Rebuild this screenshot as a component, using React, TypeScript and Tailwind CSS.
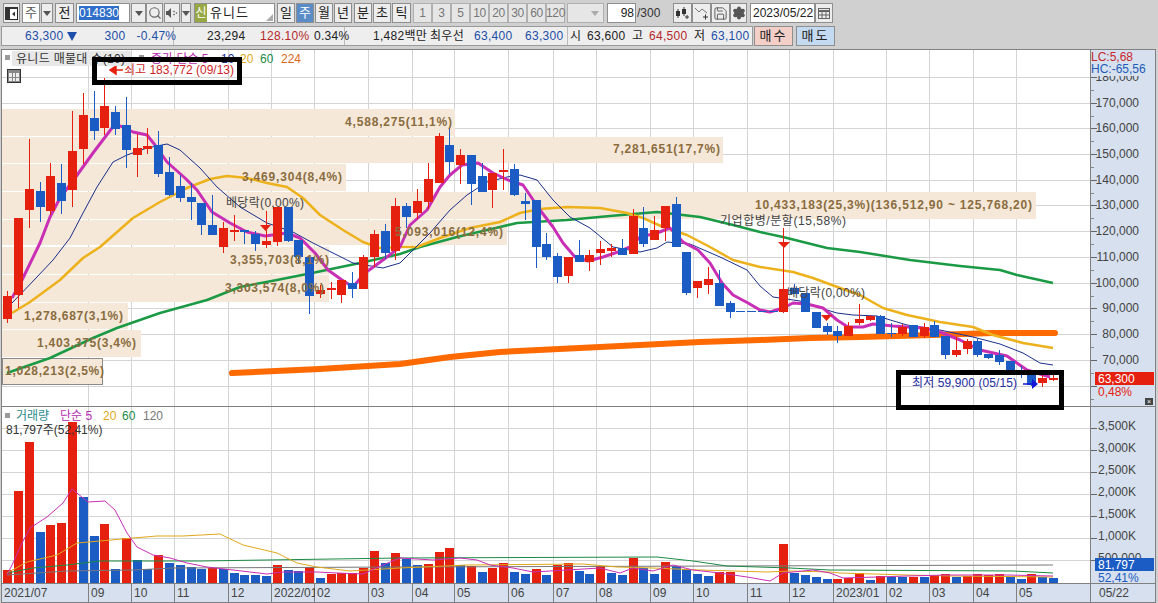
import React from "react";
import { Search, Settings, Save } from "lucide-react";

const RED = "#e6200e";
const BLUE = "#1a5cc4";

const px = (i: number) => Math.round(7.3 + 10.78 * i);

// [color, wickTop, bodyTop, bodyBottom, wickBottom], in page pixels
type Candle = [string, number, number, number, number];
const candles: Candle[] = [
  ["r", 291, 296, 319, 323], ["r", 218, 218, 295, 308], ["r", 139, 189, 210, 228], ["b", 182, 191, 207, 222],
  ["r", 163, 176, 211, 215], ["b", 164, 183, 201, 214], ["r", 111, 151, 190, 207], ["r", 93, 115, 149, 164],
  ["b", 91, 118, 131, 140], ["r", 78, 106, 128, 135], ["b", 106, 112, 129, 135], ["b", 97, 125, 150, 168],
  ["r", 134, 148, 155, 177], ["r", 128, 146, 149, 154], ["b", 131, 145, 174, 177], ["b", 157, 172, 195, 196],
  ["b", 175, 186, 198, 202], ["b", 183, 197, 202, 220], ["b", 203, 203, 225, 235], ["b", 195, 225, 235, 235],
  ["r", 222, 228, 247, 253], ["r", 215, 230, 232, 241], ["b", 230, 230, 232, 244], ["b", 231, 234, 244, 251],
  ["r", 211, 241, 245, 248], ["r", 207, 207, 242, 246], ["b", 207, 207, 241, 242], ["b", 240, 240, 257, 263],
  ["b", 257, 257, 296, 314], ["r", 285, 290, 294, 298], ["r", 282, 288, 290, 299], ["r", 280, 280, 295, 303],
  ["b", 272, 283, 289, 298], ["r", 255, 257, 289, 289], ["r", 230, 234, 257, 267], ["b", 224, 231, 253, 259],
  ["r", 198, 206, 251, 260], ["b", 203, 206, 217, 228], ["r", 189, 201, 213, 219], ["r", 163, 179, 202, 209],
  ["r", 133, 136, 183, 183], ["b", 128, 145, 162, 174], ["r", 149, 155, 165, 184], ["b", 155, 155, 184, 205],
  ["b", 163, 176, 192, 192], ["r", 173, 173, 190, 208], ["r", 149, 170, 172, 190], ["b", 164, 169, 195, 196],
  ["b", 193, 201, 204, 220], ["b", 200, 200, 247, 268], ["b", 233, 244, 257, 260], ["b", 253, 256, 277, 283],
  ["r", 257, 257, 276, 283], ["b", 240, 255, 262, 262], ["r", 250, 255, 262, 271], ["r", 241, 249, 253, 265],
  ["r", 244, 248, 251, 257], ["b", 239, 248, 255, 255], ["r", 209, 216, 254, 254], ["b", 207, 228, 244, 247],
  ["r", 216, 230, 240, 240], ["r", 206, 206, 228, 241], ["b", 197, 204, 247, 247], ["b", 252, 252, 293, 295],
  ["r", 281, 281, 288, 298], ["r", 267, 279, 285, 294], ["b", 270, 283, 306, 306], ["b", 301, 303, 312, 318],
  ["b", 311, 311, 312, 312], ["b", 311, 311, 312, 312], ["b", 311, 311, 312, 312], ["b", 311, 311, 312, 312],
  ["r", 228, 289, 312, 313], ["b", 284, 288, 294, 294], ["b", 293, 293, 312, 312], ["b", 312, 312, 328, 328],
  ["b", 323, 326, 332, 335], ["b", 326, 331, 336, 343], ["r", 322, 326, 336, 336], ["r", 304, 319, 323, 325],
  ["r", 315, 316, 320, 321], ["b", 315, 316, 334, 334], ["b", 323, 333, 334, 337], ["r", 324, 327, 334, 336],
  ["b", 325, 325, 337, 337], ["r", 323, 327, 336, 338], ["b", 321, 325, 337, 337], ["b", 336, 336, 355, 359],
  ["r", 337, 350, 355, 357], ["r", 339, 341, 349, 354], ["b", 339, 341, 355, 357], ["b", 354, 354, 358, 359],
  ["b", 350, 355, 362, 365], ["b", 361, 361, 370, 371], ["b", 366, 370, 375, 378], ["b", 375, 375, 385, 386],
  ["r", 375, 378, 383, 387], ["r", 375, 378, 380, 381],
];

// [color, top] per week; empty for the halted weeks
const volumes: ([string, number] | null)[] = [
  ["r", 570], ["r", 491], ["r", 442], ["b", 532], ["r", 525], ["r", 523], ["r", 422], ["b", 497], ["b", 536], ["r", 524],
  ["b", 569], ["r", 538], ["b", 560], ["b", 569], ["r", 555], ["b", 563], ["b", 565], ["b", 567], ["b", 569], ["r", 568],
  ["b", 569], ["b", 573], ["b", 575], ["b", 575], ["b", 576], ["r", 565], ["b", 570], ["b", 571], ["r", 567], ["b", 578],
  ["r", 574], ["r", 573], ["r", 573], ["r", 568], ["r", 551], ["b", 563], ["r", 553], ["b", 559], ["b", 565], ["r", 564],
  ["r", 552], ["r", 548], ["b", 565], ["r", 566], ["b", 572], ["r", 568], ["r", 563], ["b", 572], ["b", 574], ["r", 569],
  ["b", 575], ["r", 565], ["r", 563], ["b", 571], ["b", 574], ["r", 566], ["b", 573], ["b", 575], ["r", 558], ["b", 568],
  ["b", 574], ["r", 562], ["b", 566], ["b", 569], ["b", 574], ["b", 576], ["r", 572], ["r", 572], null, null,
  null, null, ["r", 544], ["b", 573], ["b", 575], ["b", 577], ["b", 579], ["r", 579], ["r", 578], ["r", 573],
  ["b", 580], ["r", 576], ["b", 577], ["b", 577], ["r", 577], ["b", 577], ["r", 575], ["r", 574], ["b", 577], ["r", 576],
  ["r", 574], ["r", 575], ["r", 574], ["b", 577], ["b", 579], ["r", 574], ["b", 577], ["b", 578],
];

const ma5 = "12,298 22,280 40,243 50,217 60,198 75,178 93,153 112,128 118,125 133,132 147,135 155,145 167,162 185,178 197,190 212,212 230,223 247,232 265,236 287,233 300,238 315,253 328,270 342,280 353,287 365,273 383,260 400,247 410,225 427,210 440,187 450,175 462,165 478,163 493,173 508,180 523,185 540,210 553,227 563,243 575,257 588,261 603,257 618,252 630,247 640,237 657,233 670,228 683,242 698,250 710,263 722,283 733,295 748,303 760,310 770,312 783,308 793,303 807,304 823,308 837,320 848,327 863,327 873,324 893,326 907,327 923,328 940,332 960,340 980,350 1007,356 1027,370 1050,377";
const ma10 = "12,303 37,277 53,260 70,238 83,213 97,187 113,162 127,155 147,148 167,144 180,150 200,168 217,187 240,207 267,223 293,232 313,243 333,253 353,263 383,268 400,263 413,250 430,233 450,210 467,195 487,182 507,177 520,175 537,180 553,200 570,217 590,228 613,247 640,252 657,248 667,242 690,244 720,257 747,270 760,286 773,297 800,301 817,307 837,313 853,315 877,316 907,325 940,330 973,337 1000,344 1023,353 1040,363 1053,365";
const ma20 = "12,313 30,302 60,280 83,258 100,247 133,218 160,202 187,188 210,179 227,176 247,178 267,183 287,187 303,198 320,215 343,230 363,242 380,248 400,247 417,247 440,238 470,228 500,222 520,213 540,209 567,207 600,208 627,213 643,218 663,227 687,235 710,247 733,260 760,267 793,272 813,278 840,288 860,295 883,308 907,315 940,322 973,327 993,335 1023,343 1053,348";
const ma60 = "7,373 50,358 93,338 117,328 160,313 207,300 240,287 277,280 317,272 360,263 400,254 420,247 457,237 500,227 517,223 567,220 610,216 657,212 700,217 733,225 760,232 783,237 827,248 860,252 910,260 960,266 1000,270 1017,275 1053,283";
const ma224 = "232,373 320,369 400,364 450,357 500,352 600,347 700,342 760,340 810,338 860,337 933,335 993,333 1055,333";

const vMagenta = "7,575 13,563 22,543 30,528 47,517 63,503 72,489 83,498 88,502 105,501 115,510 127,533 137,547 153,555 170,558 187,563 207,567 233,570 267,574 283,572 317,572 337,573 363,574 383,565 400,558 433,560 460,558 477,560 490,565 513,568 533,572 567,570 600,568 620,573 633,568 653,571 673,565 693,570 720,573 747,577 770,581 783,573 813,570 830,573 843,578 877,577 907,576 947,575 1007,575 1053,576";
const vGold = "7,573 27,562 57,555 77,543 100,541 133,538 157,536 183,536 220,534 243,545 277,553 297,563 317,567 350,571 400,568 467,565 583,564 617,567 653,568 700,570 767,572 790,571 830,572 840,573 907,575 953,576 1053,577";
const vGreen = "7,573 33,568 67,565 100,561 200,561 400,558 657,557 693,561 727,566 790,568 830,570 1013,571 1053,573";
const vGray = "7,575 67,571 133,570 173,568 400,567 1053,565";

const vGrid = [88, 131, 174, 228, 271, 314, 368, 412, 454, 508, 553, 596, 650, 693, 747, 789, 833, 886, 929, 973, 1016];
const priceGrid = [77, 103, 128, 154, 180, 205, 231, 257, 283, 308, 334, 360, 386];
const priceLabels = ["180,000", "170,000", "160,000", "150,000", "140,000", "130,000", "120,000", "110,000", "100,000", "90,000", "80,000", "70,000"];
const volGrid = [428, 450, 472, 494, 516, 538, 560];
const volLabels = ["3,500K", "3,000K", "2,500K", "2,000K", "1,500K", "1,000K", "500,000"];

// [top, bottom, right]
const profile = [
  [109, 136, 455], [137, 163, 723], [164, 191, 346], [192, 219, 1036], [220, 245, 507],
  [247, 274, 329], [275, 302, 329], [303, 329, 128], [330, 357, 141], [358, 385, 103],
];

// [text, x, y, width]
const profileLabels: [string, number, number, number][] = [
  ["4,588,275(11,1%)", 345, 122, 107],
  ["7,281,651(17,7%)", 613, 149, 107],
  ["3,469,304(8,4%)", 242, 177, 100],
  ["10,433,183(25,3%)(136,512,90 ~ 125,768,20)", 755, 205, 277],
  ["5,093,016(12,4%)", 395, 232, 108],
  ["3,355,703(8,1%)", 230, 260, 99],
  ["3,303,574(8,0%)", 225, 288, 99],
  ["1,278,687(3,1%)", 24, 316, 99],
  ["1,403,375(3,4%)", 37, 343, 99],
  ["1,028,213(2,5%)", 5, 371, 99],
];

const notes: [string, number, number, number][] = [
  ["배당락(0,00%)", 226, 203, 78],
  ["기업합병/분할(15,58%)", 720, 221, 126],
  ["배당락(0,00%)", 787, 293, 78],
];

const months: [string, number][] = [
  ["2021/07", 87], ["09", 43], ["10", 43], ["11", 54], ["12", 43], ["2022/01", 43], ["02", 54], ["03", 44], ["04", 42],
  ["05", 54], ["06", 45], ["07", 43], ["08", 54], ["09", 43], ["10", 54], ["11", 42], ["12", 44], ["2023/01", 53],
  ["02", 43], ["03", 44], ["04", 43], ["05", 73],
];

function Label({ x, y, w, fill, children, weight }: { x: number; y: number; w?: number; fill: string; children: React.ReactNode; weight?: number }) {
  return (
    <text x={x} y={y} dominantBaseline="central" fontSize={12} fill={fill} fontWeight={weight} textLength={w} lengthAdjust={w ? "spacing" : undefined}>
      {children}
    </text>
  );
}

function Btn({ className, bg = "bg-[#ededed] text-[#222]", children }: { className: string; bg?: string; children?: React.ReactNode }) {
  return (
    <div className={"flex h-full shrink-0 items-center justify-center border border-[#8e8e8e] text-[13px] " + bg + " " + className}>
      {children}
    </div>
  );
}

function Caret({ color = "#555" }: { color?: string }) {
  return (
    <svg width="8" height="5" viewBox="0 0 8 5">
      <path d="M0 0h8L4 5z" fill={color} />
    </svg>
  );
}

function Grid({ rows }: { rows: number[] }) {
  return (
    <g shapeRendering="crispEdges">
      {rows.map((y) => <line key={y} x1={2} x2={1090} y1={y + 0.5} y2={y + 0.5} stroke="#d4d4d4" />)}
      {vGrid.map((x) => <line key={x} x1={x + 0.5} x2={x + 0.5} y1={40} y2={590} stroke="#d4d4d4" />)}
    </g>
  );
}

function Toolbar() {
  return (
    <div className="flex h-[49px] flex-col pt-[3px]">
      <div className="flex h-[20px] pl-[3px]">
        <Btn className="w-[17px]">
          <svg width="13" height="13" viewBox="0 0 13 13">
            <rect x="0.5" y="0.5" width="12" height="12" fill="#fff" stroke="#222" />
            <rect x="0" y="0" width="5" height="13" fill="#333" />
            <rect x="0" y="0" width="13" height="2" fill="#333" />
            <path d="M10 4.500v5L7 7z" fill="#333" />
          </svg>
        </Btn>
        <Btn className="ml-[2px] w-[18px]" bg="bg-white text-[#555]">주</Btn>
        <Btn className="ml-[1px] w-[12px]"><Caret /></Btn>
        <Btn className="ml-[2px] w-[19px]">전</Btn>
        <div className="ml-[2px] flex h-full w-[54px] shrink-0 items-center border border-[#8e8e8e] bg-white pl-[2px]">
          <span className="bg-[#2f6fc9] text-[12px] leading-[14px] text-white">014830</span>
        </div>
        <Btn className="ml-[1px] w-[15px]"><Caret /></Btn>
        <Btn className="w-[17px]"><Search size={14} color="#666" strokeWidth={2} /></Btn>
        <Btn className="ml-[1px] w-[16px]">
          <svg width="12" height="12" viewBox="0 0 12 12">
            <path d="M0 4h2l3-3v10L2 8H0z" fill="#555" />
            <circle cx="8" cy="4.500" r="0.8" fill="#555" />
            <circle cx="8" cy="7.500" r="0.8" fill="#555" />
            <circle cx="10.500" cy="6" r="0.8" fill="#555" />
          </svg>
        </Btn>
        <Btn className="ml-[1px] w-[10px]"><Caret /></Btn>
        <div className="relative ml-[3px] flex h-full w-[81px] shrink-0 items-center border border-[#8e8e8e] bg-white text-[13px]">
          <span className="flex h-full w-[12px] items-center justify-center bg-[#97a843] text-[12px] text-white">신</span>
          <span className="ml-[3px] tracking-[1px] text-[#222]">유니드</span>
          <svg className="absolute bottom-[1px] right-[1px]" width="7" height="7" viewBox="0 0 7 7">
            <path d="M7 0v7H0z" fill="#aaa" />
          </svg>
        </div>
        <Btn className="ml-[2px] w-[18px]">일</Btn>
        <Btn className="ml-[1px] w-[18px]" bg="bg-[#5a8cc8] text-white">주</Btn>
        <Btn className="ml-[1px] w-[18px]">월</Btn>
        <Btn className="ml-[1px] w-[18px]">년</Btn>
        <Btn className="ml-[2px] w-[18px]">분</Btn>
        <Btn className="ml-[1px] w-[18px]">초</Btn>
        <Btn className="ml-[1px] w-[19px]">틱</Btn>
        <div className="ml-[2px] flex h-full text-[12px] text-[#777]">
          {["1", "3", "5", "10", "20", "30", "60", "120"].map((n) => (
            <div key={n} className="flex h-full w-[19px] items-center justify-center border border-[#b0b0b0] bg-[#e6e6e6] tracking-[-0.3px]">{n}</div>
          ))}
        </div>
        <div className="ml-[2px] flex h-full w-[37px] items-center justify-end border border-[#b0b0b0] bg-[#e6e6e6] pr-[4px]"><Caret color="#aaa" /></div>
        <div className="ml-[3px] flex h-full w-[29px] items-center justify-end border border-[#8e8e8e] bg-white pr-[1px] text-[12px] text-[#222]">98</div>
        <span className="flex h-full w-[37px] items-center pl-[1px] text-[12px] text-[#333]">/300</span>
        <Btn className="w-[19px]">
          <svg width="15" height="14" viewBox="0 0 15 14">
            <path d="M1 5h4v5H1zM7 3h4v5H7z" fill="#333" />
            <path d="M3 3v9M9 1v9" stroke="#333" />
            <path d="M10 11h4M12 9v4" stroke="#333" />
          </svg>
        </Btn>
        <Btn className="w-[19px]">
          <svg width="16" height="14" viewBox="0 0 16 14" fill="none">
            <path d="M1 2l4 4 3-3 5 4" stroke="#777" />
            <path d="M9 11h5M11.500 8.500v5" stroke="#333" />
          </svg>
        </Btn>
        <Btn className="w-[19px]"><Save size={15} color="#555" strokeWidth={1.5} /></Btn>
        <Btn className="w-[17px]"><Settings size={14} color="#555" fill="#555" strokeWidth={2} /></Btn>
        <div className="ml-[3px] flex h-full w-[65px] items-center border border-[#8e8e8e] bg-white pl-[2px] text-[12px] text-[#222]">2023/05/22</div>
        <Btn className="w-[18px]">
          <svg width="12" height="11" viewBox="0 0 12 11" fill="none" stroke="#666">
            <rect x="0.5" y="0.5" width="11" height="10" />
            <path d="M0 3h12" strokeWidth="2" />
            <path d="M4 3v8M8 3v8M0 7h12" />
          </svg>
        </Btn>
      </div>
      <div className="mt-[3px] flex h-[20px] pl-[1px] text-[12px] tracking-[0.3px]">
        <div className="flex h-full w-[752px] whitespace-nowrap border border-[#9a9a9a] bg-[#eeeeee]">
          <div className="flex w-[172px] shrink-0 items-center border-r border-[#bbb] text-[#1c4fa8]">
            <span className="ml-[23px] flex w-[53px] items-center gap-[3px]">
              63,300
              <svg width="10" height="9" viewBox="0 0 10 9"><path d="M0 0h10L5 9z" fill="#1c4fa8" /></svg>
            </span>
            <span className="ml-[28px] w-[20px]">300</span>
            <span className="ml-[12px]">-0.47%</span>
          </div>
          <div className="flex w-[171px] shrink-0 items-center border-r border-[#bbb] text-[#222]">
            <span className="ml-[33px] w-[37px]">23,294</span>
            <span className="ml-[16px] w-[46px] text-[#b5282a]">128.10%</span>
            <span className="ml-[8px]">0.34%</span>
          </div>
          <div className="flex w-[223px] shrink-0 items-center border-r border-[#bbb] text-[#222]">
            <span className="ml-[28px] w-[52px]">1,482백만</span>
            <span className="ml-[5px] w-[37px]">최우선</span>
            <span className="ml-[7px] w-[38px] text-[#1c4fa8]">63,400</span>
            <span className="ml-[13px] text-[#1c4fa8]">63,300</span>
          </div>
          <div className="flex items-center text-[#222]">
            <span className="ml-[2px] w-[14px]">시</span>
            <span className="ml-[3px] w-[38px]">63,600</span>
            <span className="ml-[7px] w-[14px]">고</span>
            <span className="ml-[3px] w-[38px] text-[#b5282a]">64,500</span>
            <span className="ml-[7px] w-[14px]">저</span>
            <span className="ml-[3px] text-[#1c4fa8]">63,100</span>
          </div>
        </div>
        <div className="ml-[1px] flex h-full w-[39px] items-center justify-center border border-[#8e8e8e] bg-[#f3cfc8] text-[13px] tracking-[2px] text-[#222]">매수</div>
        <div className="ml-[3px] flex h-full w-[39px] items-center justify-center border border-[#8e8e8e] bg-[#c4daf0] text-[13px] tracking-[2px] text-[#222]">매도</div>
      </div>
    </div>
  );
}

function PricePane() {
  return (
    <div className="flex h-[357px] border-b border-[#808080]">
      <div className="relative w-[1088px] overflow-hidden">
        <svg width="1088" height="356" viewBox="2 50 1088 356" className="block">
          <Grid rows={priceGrid} />
          {profile.map(([top, bottom, right]) => (
            <rect key={top} x={2} y={top} width={right - 2} height={bottom - top} fill="#f5e8d9" />
          ))}
          <rect x={2.5} y={358.5} width={100} height={26} fill="none" stroke="#8a8a8a" />
          <polyline points={ma224} fill="none" stroke="#ff6a00" strokeWidth={6} strokeLinecap="round" strokeLinejoin="round" />
          <polyline points={ma60} fill="none" stroke="#1b9a45" strokeWidth={2.5} strokeLinejoin="round" />
          <polyline points={ma20} fill="none" stroke="#edb11c" strokeWidth={2.5} strokeLinejoin="round" />
          <polyline points={ma10} fill="none" stroke="#1a2f8c" strokeWidth={1} strokeLinejoin="round" />
          <polyline points={ma5} fill="none" stroke="#c92fb4" strokeWidth={3} strokeLinejoin="round" />
          <g shapeRendering="crispEdges">
            {candles.map(([c, wt, t, b, wb], i) => {
              const fill = c === "r" ? RED : BLUE;
              const x = px(i);
              return (
                <g key={i}>
                  <rect x={x} y={wt} width={1} height={wb - wt} fill={fill} />
                  <rect x={x - 4} y={t} width={9} height={Math.max(b - t, 1)} fill={fill} />
                </g>
              );
            })}
          </g>
          {profileLabels.map(([text, x, y, w]) => (
            <Label key={text} x={x} y={y} w={w} fill="#8a6c3e" weight={600}>{text}</Label>
          ))}
          {notes.map(([text, x, y, w], i) => (
            <Label key={i} x={x} y={y} w={w} fill="#444">{text}</Label>
          ))}
          <path d="M260 225h11l-5.500 6zM778 242h12l-6 6zM821 315h11l-5.500 6z" fill={RED} />
          <Label x={124} y={70} w={110} fill="#cc1f2a">최고 183,772 (09/13)</Label>
          <path d="M123 70h-8M116 66l-6 4 6 4z" stroke={RED} strokeWidth={1.5} fill={RED} />
          <Label x={912} y={383} w={105} fill="#1f2da0">최저 59,900 (05/15)</Label>
          <path d="M1023 384h10" stroke="#1414d8" strokeWidth={1.5} />
          <path d="M1032 379l6 5-6 5z" fill="#1414d8" />
        </svg>
        <div className="absolute left-[10px] top-[1px] flex h-[15px] w-[119px] items-center bg-[#e8e8e8] pl-[4px] text-[12px] tracking-[0.3px] text-[#333]">유니드 매물대 수(10)</div>
        <div className="absolute left-[3px] top-[5px] h-[5px] w-[5px] bg-[#9a9a9a]" />
        <div className="absolute left-[137px] top-[5px] h-[5px] w-[5px] bg-[#9a9a9a]" />
        <div className="absolute left-[149px] top-[1px] flex h-[15px] items-center whitespace-nowrap text-[12px]">
          <span className="w-[70px] text-[#b52bb0]">종가 단순 5</span>
          <span className="w-[19px] text-[#1a2f8c]">10</span>
          <span className="w-[20px] text-[#e0a81c]">20</span>
          <span className="w-[21px] text-[#1b8a45]">60</span>
          <span className="text-[#d8691c]">224</span>
        </div>
        <div className="absolute left-[5px] top-[19px] grid h-[14px] w-[14px] grid-cols-3 gap-px border border-[#333] bg-[#888] p-px pt-[3px]">
          <span className="bg-[#eee]" /><span className="bg-[#eee]" /><span className="bg-[#eee]" />
          <span className="bg-[#eee]" /><span className="bg-[#eee]" /><span className="bg-[#eee]" />
        </div>
      </div>
      <div className="relative w-[65px] border-l border-[#808080] bg-[#d6e0ee]">
        <svg width="64" height="356" viewBox="1091 50 64 356" className="block">
          <g shapeRendering="crispEdges">
            {priceGrid.map((y) => (
              <g key={y}>
                <line x1={1091} x2={1097} y1={y + 0.5} y2={y + 0.5} stroke="#666" />
                <line x1={1091} x2={1094} y1={y + 13.5} y2={y + 13.5} stroke="#888" />
              </g>
            ))}
          </g>
          {priceLabels.map((t, i) => (
            <text key={t} x={1139} y={priceGrid[i]} dominantBaseline="central" textAnchor="end" fontSize={12} fill="#444">{t}</text>
          ))}
        </svg>
        <div className="absolute left-0 top-0 flex h-[26px] w-full flex-col bg-[#d6e0ee] text-[12px] leading-[12px]">
          <span className="mt-[1px] text-[#c8262a]">LC:5,68</span>
          <span className="text-[#1c5cb8]">HC:-65,56</span>
        </div>
        <div className="absolute left-[4px] top-[322px] flex h-[13px] w-[59px] items-center bg-[#e6200e] pl-[3px] text-[12px] text-white">63,300</div>
        <div className="absolute left-[7px] top-[333px] text-[12px] text-[#e6200e]">0,48%</div>
        <div className="absolute bottom-[1px] right-[2px] flex h-[7px] w-[8px] items-center justify-center bg-[#444] text-[7px] leading-none text-white">×</div>
      </div>
    </div>
  );
}

function VolumePane() {
  return (
    <div className="flex h-[177px] border-b border-[#808080]">
      <div className="relative w-[1088px] overflow-hidden">
        <svg width="1088" height="176" viewBox="2 407 1088 176" className="block">
          <Grid rows={volGrid} />
          <g shapeRendering="crispEdges">
            {volumes.map((v, i) =>
              v ? <rect key={i} x={px(i) - 4} y={v[1]} width={9} height={583 - v[1]} fill={v[0] === "r" ? RED : BLUE} /> : null
            )}
          </g>
          <polyline points={vGray} fill="none" stroke="#777" />
          <polyline points={vGreen} fill="none" stroke="#1b8a45" />
          <polyline points={vGold} fill="none" stroke="#e0a81c" />
          <polyline points={vMagenta} fill="none" stroke="#c92fb4" />
        </svg>
        <div className="absolute left-[3px] top-[6px] h-[5px] w-[5px] bg-[#9a9a9a]" />
        <div className="absolute left-[14px] top-[1px] flex h-[15px] items-center whitespace-nowrap text-[12px]">
          <span className="w-[44px] text-[#2a8a8e]">거래량</span>
          <span className="w-[43px] text-[#b52bb0]">단순 5</span>
          <span className="w-[19px] text-[#e0a81c]">20</span>
          <span className="w-[21px] text-[#1b8a45]">60</span>
          <span className="text-[#777]">120</span>
        </div>
        <div className="absolute left-[4px] top-[14px] whitespace-nowrap text-[12px] text-[#333]">81,797주(52,41%)</div>
      </div>
      <div className="relative w-[65px] border-l border-[#808080] bg-[#d6e0ee]">
        <svg width="64" height="176" viewBox="1091 407 64 176" className="block">
          <g shapeRendering="crispEdges">
            {volGrid.map((y) => <line key={y} x1={1091} x2={1097} y1={y + 0.5} y2={y + 0.5} stroke="#666" />)}
          </g>
          {volLabels.map((t, i) => (
            <text key={t} x={1098} y={volGrid[i] - 2} dominantBaseline="central" fontSize={12} fill="#444">{t}</text>
          ))}
        </svg>
        <div className="absolute left-[4px] top-[151px] flex h-[13px] w-[59px] items-center bg-[#1a5cc4] pl-[3px] text-[12px] text-white">81,797</div>
        <div className="absolute left-[7px] top-[162px] text-[12px] text-[#1a5cc4]">52,41%</div>
      </div>
    </div>
  );
}

export default function App() {
  return (
    <div className="h-[603px] w-[1158px] overflow-hidden bg-[#d0d0d0] [font-family:'Liberation_Sans','Noto_Sans_CJK_KR',sans-serif]">
      <Toolbar />
      <div className="relative ml-[1px] flex h-[554px] w-[1155px] flex-col border border-[#808080] bg-white">
        <PricePane />
        <VolumePane />
        <div className="flex h-[18px] text-[12px] text-[#444]">
          <div className="flex w-[1088px]">
            {months.map(([m, w], i) => (
              <div key={i} style={{ width: w }} className="flex items-center border-r border-[#808080] bg-[#d6e0ee] pl-[2px] last:border-r-0">{m}</div>
            ))}
          </div>
          <div className="flex w-[65px] items-center border-l border-[#808080] bg-[#d6e0ee] pl-[8px]">05/22</div>
        </div>
        <div className="absolute left-[90px] top-[7px] h-[28px] w-[150px] border-[5px] border-black" />
        <div className="absolute left-[894px] top-[320px] h-[40px] w-[168px] border-[5px] border-black" />
      </div>
    </div>
  );
}
